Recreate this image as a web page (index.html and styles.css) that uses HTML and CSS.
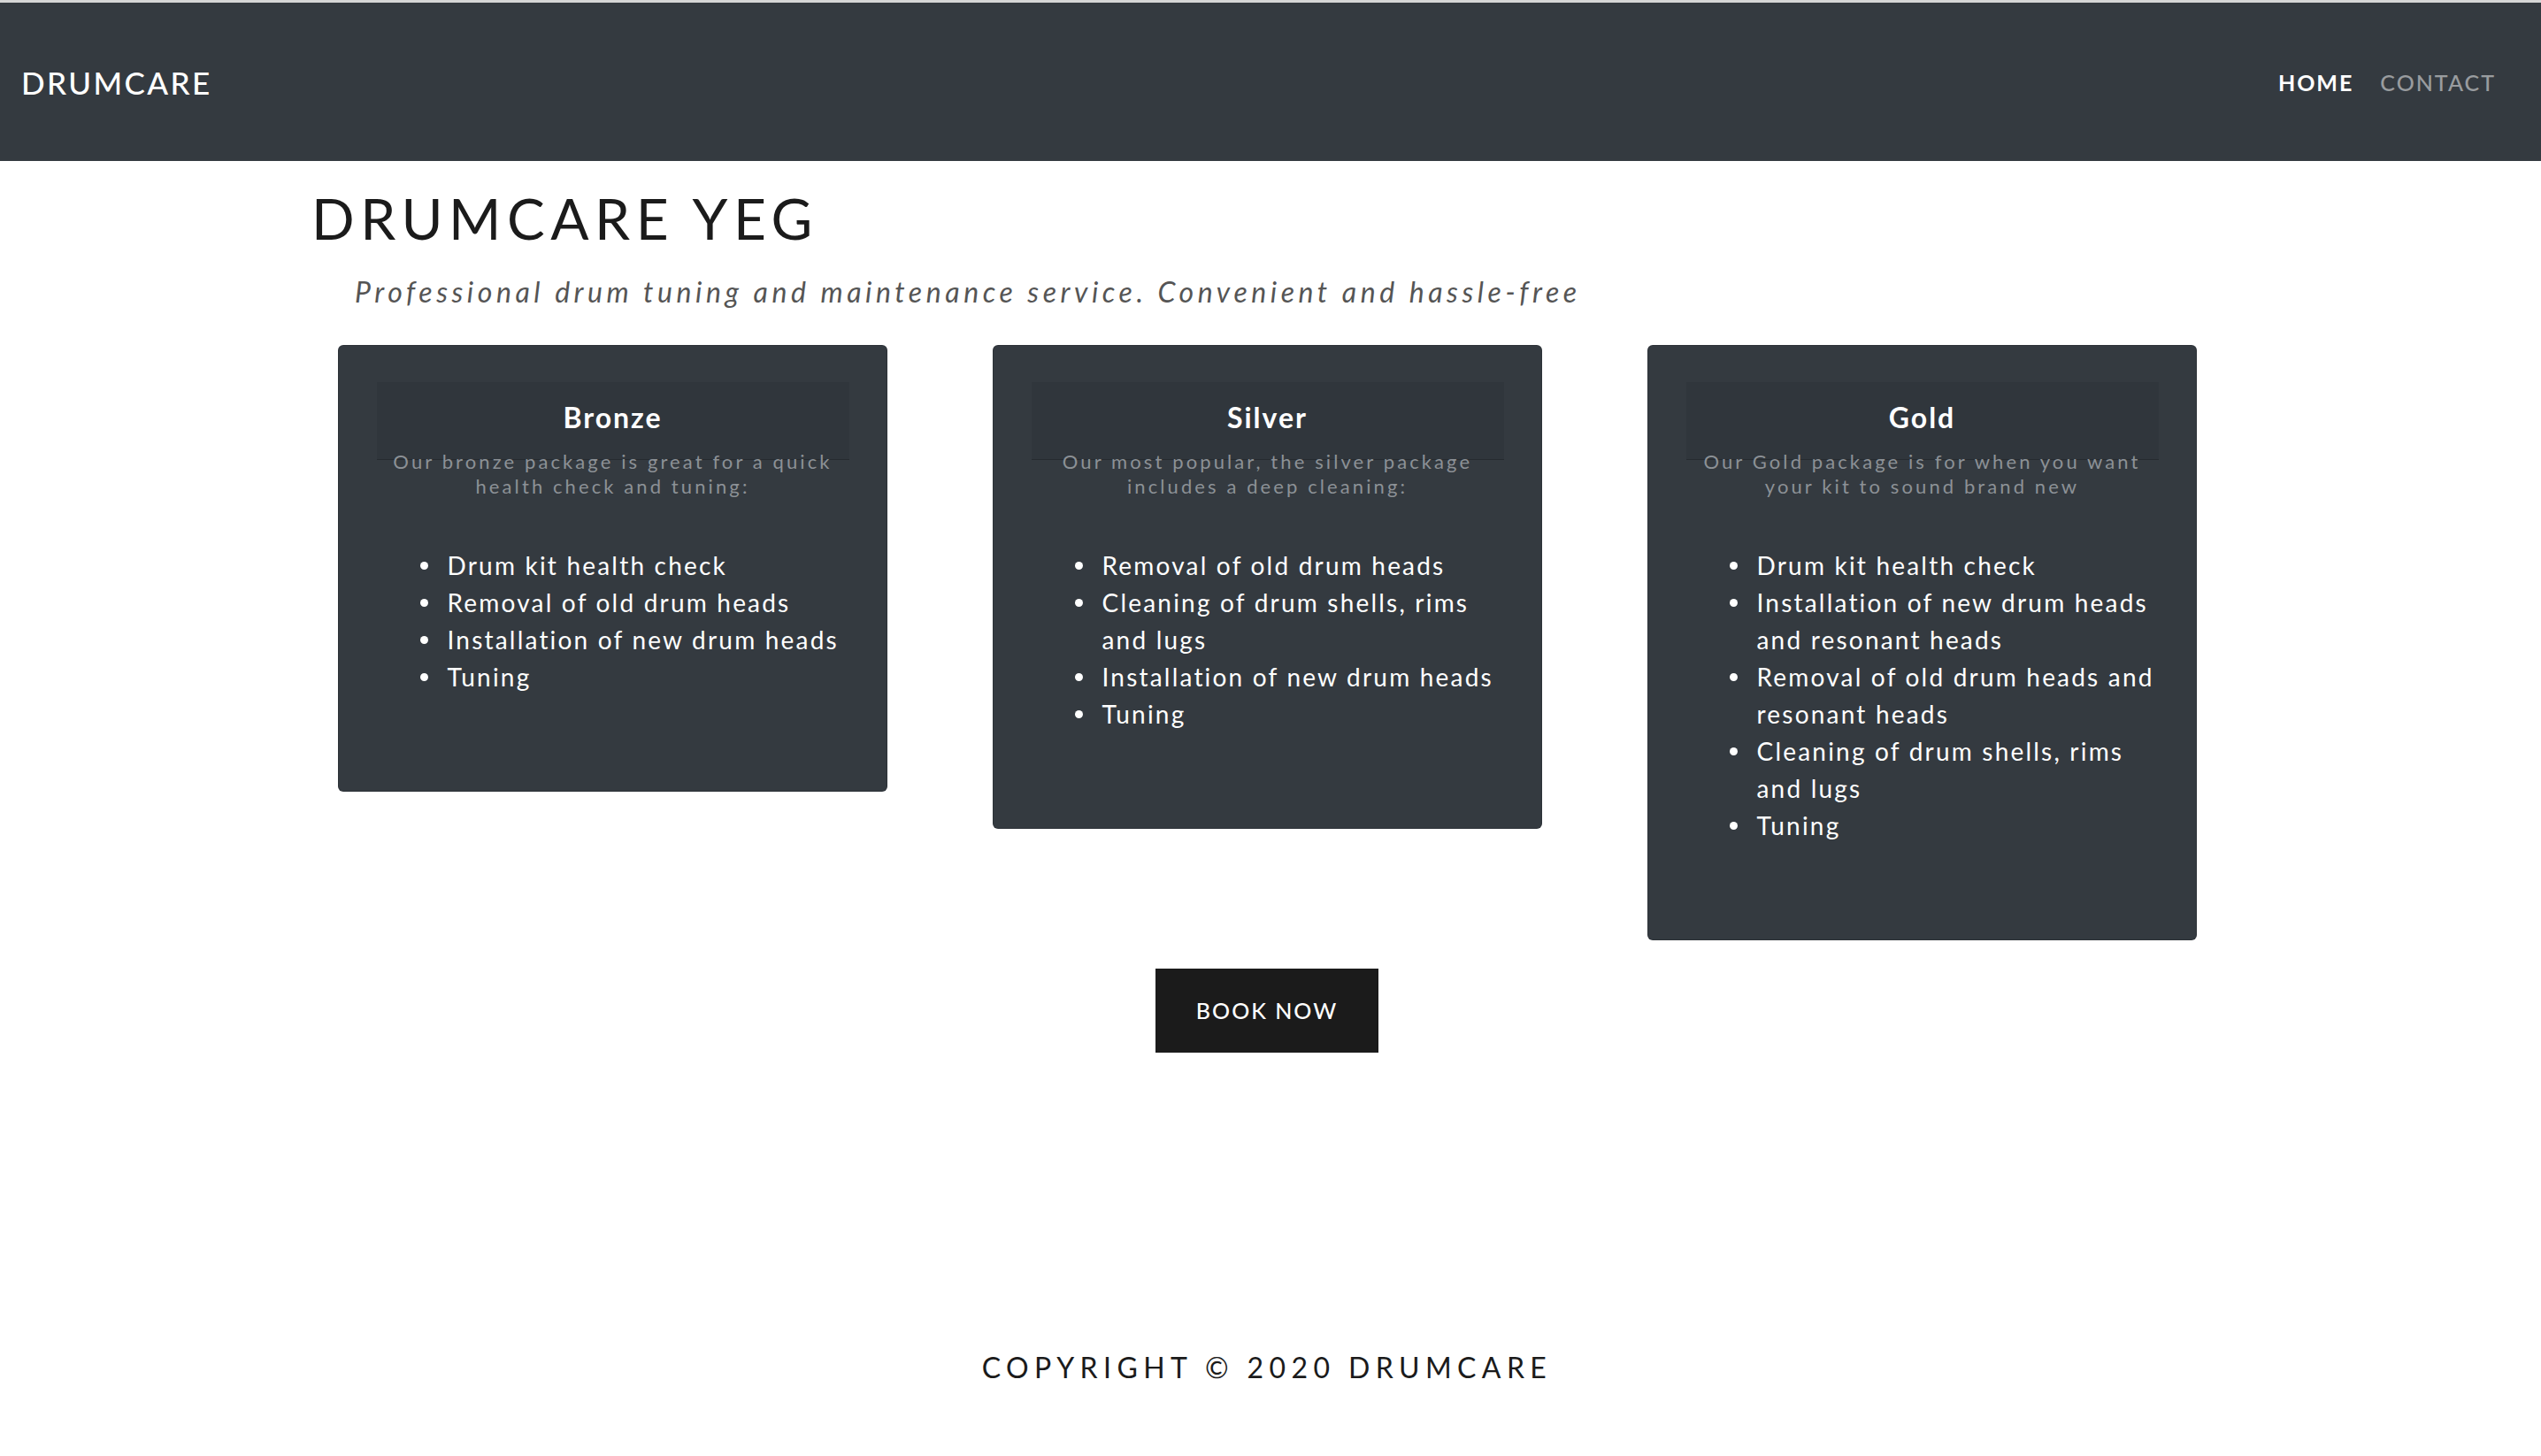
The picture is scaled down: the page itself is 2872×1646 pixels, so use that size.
FILE: index.html
```html
<!DOCTYPE html>
<html lang="en">
<head>
<meta charset="utf-8">
<title>DrumCare YEG</title>
<link rel="stylesheet" href="styles.css">
</head>
<body>
<header class="navbar">
  <a class="brand" href="#">DRUMCARE</a>
  <nav class="nav">
    <a class="nav-link active" href="#">HOME</a>
    <a class="nav-link" href="#">CONTACT</a>
  </nav>
</header>
<main class="main">
  <div class="intro">
    <h1 class="title">DRUMCARE YEG</h1>
    <p class="lead">Professional drum tuning and maintenance service. Convenient and hassle-free</p>
  </div>
  <section class="cards">
    <article class="card">
      <div class="card-header"><h5 class="card-title">Bronze</h5></div>
      <p class="card-subtitle">Our bronze package is great for a quick health check and tuning:</p>
      <ul class="card-list">
        <li>Drum kit health check</li>
        <li>Removal of old drum heads</li>
        <li>Installation of new drum heads</li>
        <li>Tuning</li>
      </ul>
    </article>
    <article class="card">
      <div class="card-header"><h5 class="card-title">Silver</h5></div>
      <p class="card-subtitle">Our most popular, the silver package includes a deep cleaning:</p>
      <ul class="card-list">
        <li>Removal of old drum heads</li>
        <li>Cleaning of drum shells, rims and lugs</li>
        <li>Installation of new drum heads</li>
        <li>Tuning</li>
      </ul>
    </article>
    <article class="card">
      <div class="card-header"><h5 class="card-title">Gold</h5></div>
      <p class="card-subtitle">Our Gold package is for when you want your kit to sound brand new</p>
      <ul class="card-list">
        <li>Drum kit health check</li>
        <li>Installation of new drum heads and resonant heads</li>
        <li>Removal of old drum heads and resonant heads</li>
        <li>Cleaning of drum shells, rims and lugs</li>
        <li>Tuning</li>
      </ul>
    </article>
  </section>
  <div class="cta">
    <a class="btn" href="#">BOOK NOW</a>
  </div>
</main>
<footer class="footer">
  <p class="copyright">COPYRIGHT &copy; 2020 DRUMCARE</p>
</footer>
</body>
</html>
```
FILE: styles.css
```css
* { box-sizing: border-box; }

html, body {
  margin: 0;
  padding: 0;
  background: #ffffff;
  font-family: "Lato", "Noto Sans", "DejaVu Sans", sans-serif;
  color: #212121;
}

a { text-decoration: none; }

.navbar {
  border-top: 3px solid #d6d6d6;
  background: #343a40;
  height: 182px;
  display: flex;
  align-items: center;
  justify-content: space-between;
  padding: 0 36px 0 24px;
}

.brand {
  color: #ffffff;
  font-size: 35px;
  letter-spacing: 2.4px;
  font-weight: 500;
}

.nav {
  display: flex;
  align-items: center;
}

.nav-link {
  color: rgba(255, 255, 255, 0.5);
  font-size: 25px;
  letter-spacing: 2px;
  padding: 8px 15px;
  font-weight: 500;
}

.nav-link.active {
  color: #ffffff;
  font-weight: 700;
}

.main {
  padding-right: 8px;
}

.intro {
  width: 2160px;
  margin: 0 auto;
}

.title {
  margin: 27px 0 0 0;
  font-size: 64px;
  line-height: 1.2;
  font-weight: 400;
  letter-spacing: 6.5px;
  color: #1b1b1b;
}

.lead {
  margin: 25px 0 0 0;
  padding-left: 49px;
  font-size: 32px;
  line-height: 1.2;
  font-style: italic;
  letter-spacing: 4.55px;
  color: #555555;
}

.cards {
  display: flex;
  justify-content: center;
  align-items: flex-start;
  gap: 119px;
  margin-top: 41px;
}

.card {
  width: 621px;
  background: #343a40;
  border: 1px solid rgba(0, 0, 0, 0.125);
  border-radius: 6px;
  padding: 41px 42px 42px 43px;
  color: #ffffff;
}

.card-header {
  background: rgba(0, 0, 0, 0.06);
  border-bottom: 1px solid rgba(0, 0, 0, 0.2);
  padding: 21px 10px 27px;
  text-align: center;
}

.card-title {
  margin: 0;
  font-size: 32px;
  line-height: 1.2;
  font-weight: 700;
  letter-spacing: 2px;
}

.card-subtitle {
  margin: -12px 0 0 0;
  text-align: center;
  font-size: 22px;
  line-height: 28px;
  letter-spacing: 3.1px;
  color: #8c9196;
  padding: 0 8px;
}

.card-list {
  margin: 54px 0 66px 0;
  padding-left: 80px;
  padding-right: 4px;
  font-size: 28px;
  line-height: 42px;
  letter-spacing: 2.2px;
  list-style: none;
}

.card-list li {
  position: relative;
}

.card-list li::before {
  content: "";
  position: absolute;
  left: -31px;
  top: 17px;
  width: 9px;
  height: 9px;
  border-radius: 50%;
  background: #ffffff;
}

.cta {
  display: flex;
  justify-content: center;
  margin-top: 32px;
}

.btn {
  display: flex;
  align-items: center;
  justify-content: center;
  width: 252px;
  height: 95px;
  background: #1b1b1b;
  color: #ffffff;
  font-size: 25px;
  letter-spacing: 2px;
  font-weight: 500;
}

.footer {
  padding-right: 8px;
  padding-top: 337px;
  text-align: center;
}

.copyright {
  margin: 0;
  font-size: 32px;
  line-height: 1.2;
  letter-spacing: 6.4px;
  color: #1b1b1b;
}
```
